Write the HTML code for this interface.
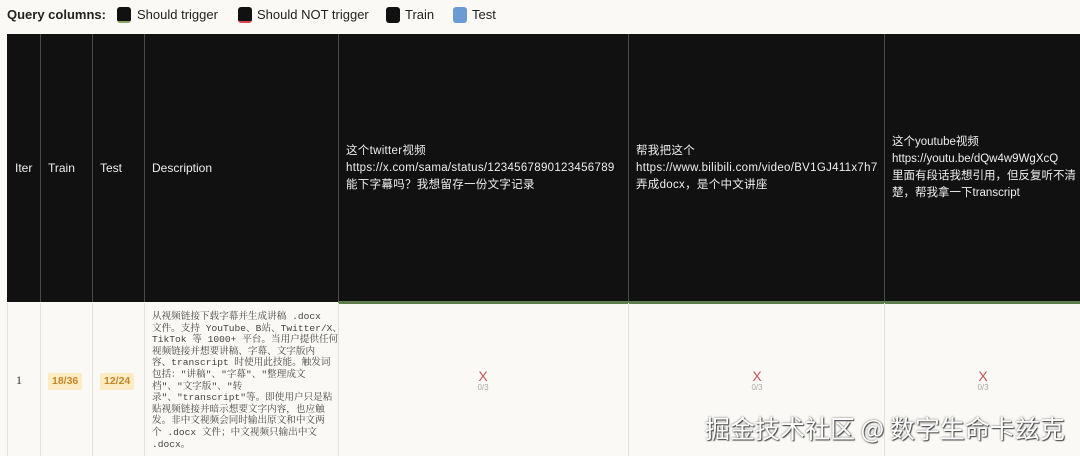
<!DOCTYPE html>
<html><head><meta charset="utf-8"><style>
*{margin:0;padding:0;box-sizing:border-box}
body{width:1080px;height:456px;overflow:hidden;background:#faf9f5;font-family:"Liberation Sans","Noto Sans CJK SC",sans-serif;position:relative}
.leg{position:absolute;top:7px;font-size:13px;color:#222;white-space:nowrap}
.sw{position:absolute;top:7px;width:14px;height:16px;border-radius:3px;background:#111}
.h{position:absolute;top:34px;height:268px;background:#111;color:#eee;font-size:12px}
.sep{position:absolute;top:34px;height:268px;width:1px;background:#4a4a4a}
.h span{position:absolute;left:8px;top:127px}
.q{position:absolute;left:8px;top:109px;line-height:17px;font-size:11.5px;white-space:nowrap;letter-spacing:0.3px}
.b{position:absolute;top:303px;height:153px;border-right:1px solid #e2e1dc}
.g{position:absolute;top:301px;height:3px;background:#5e7c4e}
.badge{position:absolute;top:373px;height:17px;background:#fcecc4;color:#c4862a;font-family:"Liberation Sans",sans-serif;font-weight:bold;font-size:10.5px;line-height:17px;padding:0 4px;border-radius:2px}
.x{position:absolute;top:368px;width:40px;text-align:center;color:#c9535f;font-size:14px;font-family:"Liberation Sans",sans-serif;font-weight:300}
.x i{display:block;font-style:normal;font-size:8px;color:#aaa;margin-top:-1px}
.d{position:absolute;left:8px;top:8px;width:190px;font-family:'Liberation Mono','Noto Serif CJK SC',monospace;font-size:9.6px;line-height:11.6px;color:#444;white-space:nowrap}
</style></head><body>
<div class="leg" style="left:7px;font-weight:bold">Query columns:</div>
<div class="sw" style="left:117px;border-bottom:2px solid #8aa067"></div><div class="leg" style="left:137px">Should trigger</div>
<div class="sw" style="left:238px;border-bottom:2px solid #d9444e"></div><div class="leg" style="left:257px">Should NOT trigger</div>
<div class="sw" style="left:386px"></div><div class="leg" style="left:405px">Train</div>
<div class="sw" style="left:453px;background:#6b9bd2"></div><div class="leg" style="left:472px">Test</div>

<div class="h" style="left:7px;width:1073px"></div>
<div class="h" style="left:7px;width:33px;background:none"><span>Iter</span></div>
<div class="h" style="left:40px;width:52px;background:none"><span>Train</span></div>
<div class="h" style="left:92px;width:52px;background:none"><span>Test</span></div>
<div class="h" style="left:144px;width:194px;background:none"><span>Description</span></div>
<div class="h" style="left:338px;width:290px;background:none"><div class="q">这个twitter视频<br>https://x.com/sama/status/1234567890123456789<br>能下字幕吗？我想留存一份文字记录</div></div>
<div class="h" style="left:628px;width:256px;background:none"><div class="q">帮我把这个<br>https://www.bilibili.com/video/BV1GJ411x7h7<br>弄成docx，是个中文讲座</div></div>
<div class="h" style="left:884px;width:196px;background:none"><div class="q" style="top:100px;letter-spacing:0">这个youtube视频<br>https://youtu.be/dQw4w9WgXcQ<br>里面有段话我想引用，但反复听不清<br>楚，帮我拿一下transcript</div></div>
<div class="sep" style="left:40px"></div><div class="sep" style="left:92px"></div><div class="sep" style="left:144px"></div><div class="sep" style="left:338px"></div><div class="sep" style="left:628px"></div><div class="sep" style="left:884px"></div>
<div class="g" style="left:338px;width:742px"></div>

<div class="b" style="left:7px;width:34px;border-left:1px solid #e2e1dc"><span style="position:absolute;left:8px;top:70px;font-family:'Liberation Serif',serif;font-size:12px;color:#333">1</span></div>
<div class="b" style="left:40px;width:53px"></div>
<div class="b" style="left:92px;width:53px"></div>
<div class="b" style="left:144px;width:195px"><div class="d">从视频链接下载字幕并生成讲稿 .docx<br>文件。支持 YouTube、B站、Twitter/X、<br>TikTok 等 1000+ 平台。当用户提供任何<br>视频链接并想要讲稿、字幕、文字版内<br>容、transcript 时使用此技能。触发词<br>包括："讲稿"、"字幕"、"整理成文<br>档"、"文字版"、"转<br>录"、"transcript"等。即使用户只是粘<br>贴视频链接并暗示想要文字内容，也应触<br>发。非中文视频会同时输出原文和中文两<br>个 .docx 文件；中文视频只输出中文<br>.docx。</div></div>
<div class="b" style="left:338px;width:291px"></div>
<div class="b" style="left:628px;width:257px"></div>
<div class="badge" style="left:48px">18/36</div>
<div class="badge" style="left:100px">12/24</div>
<div class="x" style="left:463px">X<i>0/3</i></div>
<div class="x" style="left:737px">X<i>0/3</i></div>
<div class="x" style="left:963px">X<i>0/3</i></div>
<div style="position:absolute;left:705px;top:410px;font-size:25px;color:#fff;text-shadow:1px 1px 1px #444,0 0 2px #666;white-space:nowrap;font-family:'Noto Sans CJK SC',sans-serif">掘金技术社区 @ 数字生命卡兹克</div>
</body></html>
